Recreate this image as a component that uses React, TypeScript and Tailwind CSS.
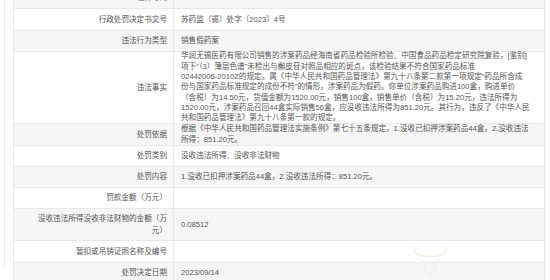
import React from 'react';

// Penalty record detail table (行政处罚信息)

type Row = {
  label: React.ReactNode;
  value?: React.ReactNode;
  height: string;
  gray: boolean;
};

const facts = [
  '华润无锡医药有限公司销售的涉案药品经海南省药品检验所检验、中国食品药品检定研究院复验，[鉴别]',
  '项下“（3）薄层色谱”未检出与槲皮苷对照品相应的斑点，该检验结果不符合国家药品标准',
  '02442006-2010Z的规定。属《中华人民共和国药品管理法》第九十八条第二款第一项规定“药品所含成',
  '份与国家药品标准规定的成份不符”的情形，涉案药品为假药。你单位涉案药品购进100盒，购进单价',
  '（含税）为14.50元，货值金额为1520.00元，销售100盒，销售单价（含税）为15.20元，违法所得为',
  '1520.00元，涉案药品召回44盒实际销售56盒，应没收违法所得为851.20元。其行为，违反了《中华人民',
  '共和国药品管理法》第九十八条第一款的规定。',
];

const basis = [
  '根据《中华人民共和国药品管理法实施条例》第七十五条规定，1.没收已扣押涉案药品44盒，2.没收违法',
  '所得：851.20元。',
];

function Lines({ lines }: { lines: string[] }) {
  return (
    <div className="leading-[10.3px]">
      {lines.map((l) => (
        <div key={l} className="whitespace-nowrap">{l}</div>
      ))}
    </div>
  );
}

const rows: Row[] = [
  { label: '证件号码', height: 'h-[21px] mt-[-12px]', gray: true },
  { label: '行政处罚决定书文号', value: '苏药监（锡）处字〔2023〕4号', height: 'h-[22px]', gray: false },
  { label: '违法行为类型', value: '销售假药案', height: 'h-[21px]', gray: true },
  { label: '违法事实', value: <Lines lines={facts} />, height: 'h-[72px]', gray: false },
  { label: '处罚依据', value: <Lines lines={basis} />, height: 'h-[22px]', gray: true },
  { label: '处罚类别', value: '没收违法所得、没收非法财物', height: 'h-[21px]', gray: false },
  { label: '处罚内容', value: '1.没收已扣押涉案药品44盒，2.没收违法所得：851.20元。', height: 'h-[21px]', gray: true },
  { label: '罚款金额（万元）', height: 'h-[21px]', gray: false },
  {
    label: (
      <div className="leading-[11.5px]">
        <div>没收违法所得没收非法财物的金额（万</div>
        <div>元）</div>
      </div>
    ),
    value: '0.08512',
    height: 'h-[32px]',
    gray: true,
  },
  { label: '暂扣或吊销证照名称及编号', height: 'h-[22px]', gray: false },
  { label: '处罚决定日期', value: '2023/09/14', height: 'h-[21px]', gray: true },
];

function Watermark() {
  return (
    <svg
      className="absolute left-[411px] top-[243px] opacity-60"
      width="38"
      height="36"
      viewBox="0 0 38 36"
      fill="none"
    >
      <path d="M3 4 C2 12 10 14 19 13 C28 14 36 12 35 4" stroke="#f3dcc0" strokeWidth="1.2" />
      <path d="M8 16 L13 18 L14 28 L19 34 L24 28 L25 18 L30 16" stroke="#e6e6e6" strokeWidth="1" />
      <path d="M15 22 L17 24 M23 22 L21 24 M17 30 L21 30" stroke="#e6e6e6" strokeWidth="1" />
    </svg>
  );
}

export default function App() {
  return (
    <div
      className="relative w-[550px] h-[280px] overflow-hidden bg-white pl-[4px] text-[7.6px] text-[#555]"
      style={{ fontFamily: '"Liberation Sans", "Noto Sans CJK SC", sans-serif' }}
    >
      <div className="h-full border-l border-[#ececec] pl-[8px]">
        <div className="w-[532px] border-x border-[#e8e8e8]">
          {rows.map((r, i) => (
            <div
              key={i}
              className={`flex border-b border-[#e8e8e8] ${r.height} ${r.gray ? 'bg-[#f6f6f6]' : 'bg-white'}`}
            >
              <div className="w-[160px] shrink-0 border-r border-[#e8e8e8] flex items-center justify-end pr-[6px] text-right">
                {r.label}
              </div>
              <div className="flex-1 flex items-center pl-[7px]">{r.value}</div>
            </div>
          ))}
        </div>
      </div>
      <Watermark />
    </div>
  );
}
